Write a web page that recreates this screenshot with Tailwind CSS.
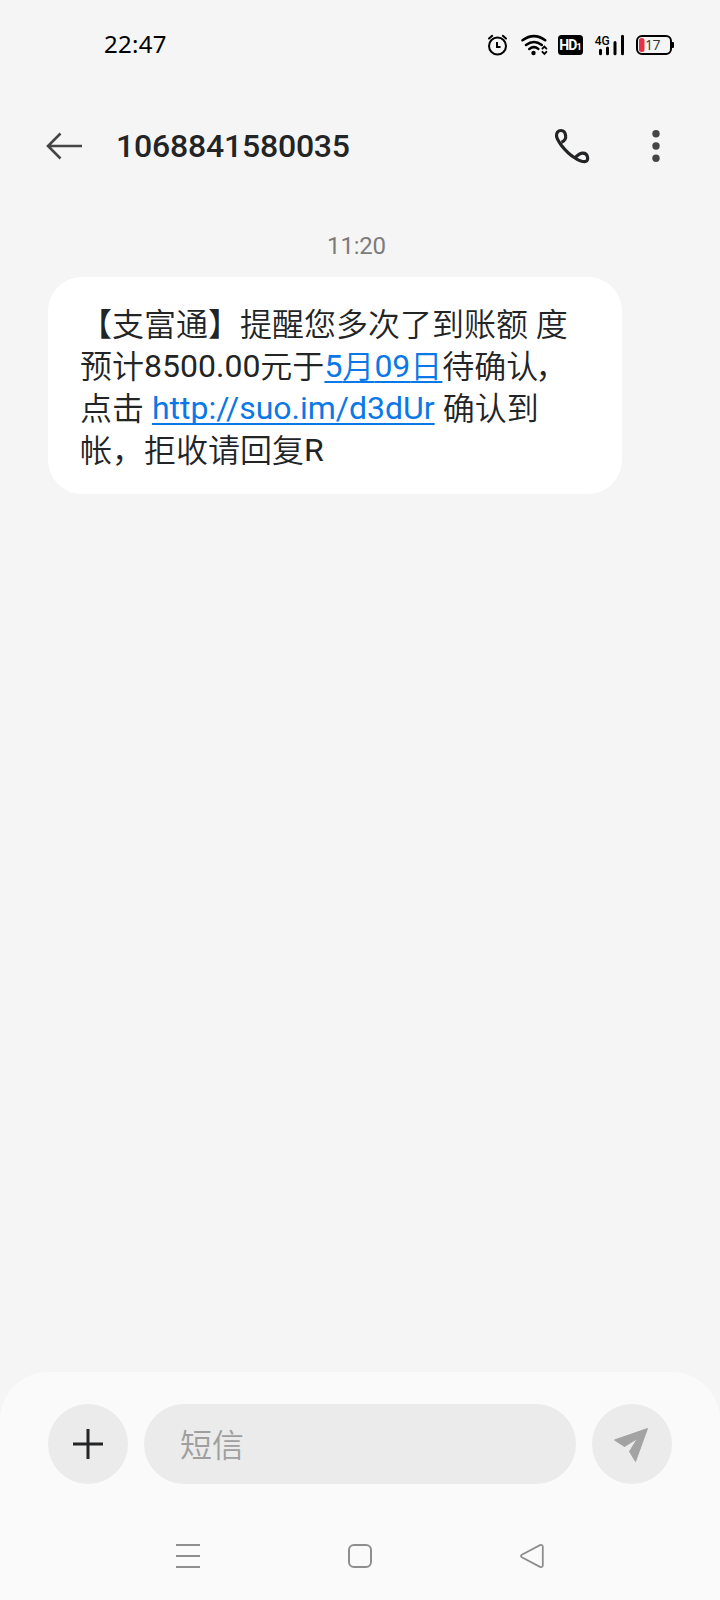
<!DOCTYPE html>
<html lang="zh-CN">
<head>
<meta charset="utf-8">
<title>短信</title>
<script src="https://cdn.jsdelivr.net/npm/@tailwindcss/browser@4"></script>
</head>
<body class="bg-[#f5f5f5]">
<div class="w-[720px] h-[1600px] flex flex-col overflow-hidden bg-[#f5f5f5] text-[#222426] font-['Roboto','Noto_Sans_CJK_SC',sans-serif]">
  <!-- status bar -->
  <header class="h-[90px] flex items-center pl-[104px] pr-[45px] shrink-0 text-black">
    <span class="font-['Noto_Sans',sans-serif] text-[24px] leading-[30px] tracking-[0.3px] -mt-[2px]">22:47</span>
    <div class="flex items-center ml-auto">
      <svg width="22" height="24" viewBox="487 33 22 24" fill="none" stroke="#000" stroke-width="2" stroke-linecap="round"><circle cx="497.5" cy="46" r="8.5"/><path d="M489 38.5l3.2-2.7M506 38.5l-3.2-2.7"/><path d="M497 42v5h3.500" stroke-linecap="butt"/></svg>
      <svg class="ml-[12px]" width="28" height="24" viewBox="521 33 28 24" fill="none" stroke="#000" stroke-width="2.500" stroke-linecap="round"><path d="M522.500 40.300Q534 32 545.200 40.300M526 44.900Q534 39 541.800 44.900M529.300 48.900Q534 45.400 538.300 48.900"/><circle cx="533.500" cy="53" r="2.200" fill="#000" stroke="none"/><path d="M542.400 48.600l2-2 2 2M542.400 51.800l2 2 2-2" stroke-width="1.900"/></svg>
      <div class="ml-[9px] mr-px w-[25px] h-5 rounded-[3.5px] bg-black text-white font-bold flex items-baseline justify-center leading-5"><span class="text-[14px] tracking-[-0.8px]">HD</span><span class="text-[9px]">1</span></div>
      <svg class="ml-[10px]" width="32" height="24" viewBox="594 33 32 24"><text x="594.700" y="45" font-family="Roboto" font-size="13.500" font-weight="500" textLength="15" lengthAdjust="spacingAndGlyphs">4G</text><path d="M600.500 50.200v3.500M607.500 48v5.700M615 42.500v11.200M622.500 36.300v17.400" stroke="#000" stroke-width="3" stroke-linecap="round"/></svg>
      <svg class="ml-[9px]" width="40" height="24" viewBox="635 33 40 24"><rect x="637" y="36" width="34" height="18" rx="5" fill="none" stroke="#000" stroke-width="2"/><rect x="639" y="38" width="5.500" height="14" rx="2.500" fill="#e8304a"/><path d="M672 42h1a1 1 0 0 1 1 1v4a1 1 0 0 1-1 1h-1z"/><text x="645" y="50" font-family="Open Sans" font-size="14" font-weight="400" fill="#333" textLength="15.500">17</text></svg>
    </div>
  </header>
  <!-- conversation header -->
  <div class="h-[112px] flex items-center pl-[46px] pr-[59px] shrink-0">
    <svg width="36" height="28" viewBox="0 0 36 28" fill="none" stroke="#454545" stroke-width="2.600"><path d="M14.500 1.500L2 14l12.500 12.500M2 14h34"/></svg>
    <h1 class="ml-[34px] text-[32px] leading-[40px] font-medium tracking-[-0.2px]">1068841580035</h1>
    <svg class="ml-auto" width="36" height="36" viewBox="554 128 36 36" fill="none" stroke="#222426" stroke-width="3.200" stroke-linejoin="round"><path d="M561.500 142.200c3-1.300 4.500-3.300 4.200-6-.3-3.500-2.200-5.700-4.800-5.700-2.800 0-4.600 2.200-4.400 5.300.2 2.500 1.800 5.200 5 9.700 3.500 4.500 8.500 9.500 13.500 12.500 4.500 3 7.500 3.700 10 3.600 2.200-.1 2.900-2 2.600-4.200-.4-3-2.800-4.500-5.600-4.300-3.200.2-4.300 2.400-6.800 4.500"/></svg>
    <svg class="ml-[61px]" width="10" height="34" viewBox="0 0 10 34" fill="#454545"><circle cx="5" cy="4.700" r="3.700"/><circle cx="5" cy="17" r="3.700"/><circle cx="5" cy="29.300" r="3.700"/></svg>
  </div>
  <!-- messages -->
  <main class="grow flex flex-col">
    <time class="mt-[28px] mr-[7px] text-center text-[24px] leading-[32px] text-[#7c7c7c] tracking-[-0.2px]">11:20</time>
    <div class="mt-[15px] ml-12 w-[574px] h-[217px] rounded-[34px] bg-white pt-[27px] px-8 text-[32px] leading-[42px] whitespace-nowrap font-[350]">
      <p>【支富通】提醒您多次了到账额 度</p>
      <p>预计<span class="font-normal leading-none align-[1px]">8500.00</span>元于<a class="text-[#0b78e8] underline decoration-[2px] underline-offset-[3px] [text-decoration-skip-ink:none]"><span class="font-normal leading-none align-[1px]">5</span>月<span class="font-normal leading-none align-[1px]">09</span>日</a>待确认<span class="-ml-[3px]">，</span></p>
      <p>点击<span class="font-normal leading-none align-[1px]"> <a class="text-[#0b78e8] underline decoration-[2px] underline-offset-[4px] [text-decoration-skip-ink:none]">http://suo.im/d3dUr</a> </span>确认到</p>
      <p>帐，拒收请回复<span class="font-normal leading-none align-[1px]">R</span></p>
    </div>
  </main>
  <!-- composer and navigation -->
  <footer class="h-[228px] shrink-0 rounded-t-[48px] bg-[#fafafa] pt-8">
    <div class="flex gap-4 px-12">
      <div class="size-20 rounded-full bg-[#ebebeb] flex items-center justify-center">
        <svg width="30" height="30" viewBox="0 0 30 30" stroke="#222426" stroke-width="3"><path d="M15 0v30M0 15h30"/></svg>
      </div>
      <div class="grow h-20 rounded-full bg-[#ebebeb] pl-9 pt-1 flex items-center text-[32px] leading-[42px] font-[350] text-[#9f9f9f]"><span>短信</span></div>
      <div class="size-20 rounded-full bg-[#ebebeb]">
        <svg width="80" height="80" viewBox="592 1404 80 80" fill="#a3a3a3" stroke="#a3a3a3" stroke-width="1" stroke-linejoin="round"><path d="M647.500 1428.500L614.500 1440l10 6.500L637.500 1438.500 629.500 1451.500l6 10z"/></svg>
      </div>
    </div>
    <nav class="mt-[60px] px-[176px] flex justify-between text-[#8e8e8e]">
      <svg width="24" height="24" viewBox="0 0 24 24" fill="none" stroke="currentColor" stroke-width="2"><path d="M0 1h24M0 12h24M0 23h24"/></svg>
      <svg width="24" height="24" viewBox="0 0 24 24" fill="none" stroke="currentColor" stroke-width="2"><rect x="1" y="1" width="22" height="22" rx="5"/></svg>
      <svg width="24" height="24" viewBox="0 0 24 24" fill="none" stroke="currentColor" stroke-width="1.800"><path d="M1.800 10.800L20 1.200q2.800-1 2.800 1.800v18q0 2.800-2.800 1.800L1.800 13.200q-1.600-1.200 0-2.400z"/></svg>
    </nav>
  </footer>
</div>
</body>
</html>
